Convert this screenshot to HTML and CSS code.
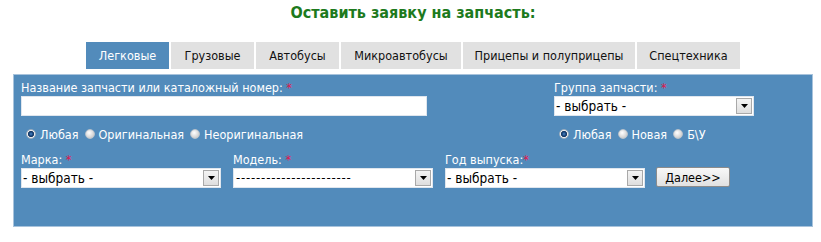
FILE: index.html
```html
<!DOCTYPE html>
<html lang="ru">
<head>
<meta charset="utf-8">
<title>Оставить заявку на запчасть</title>
<link rel="stylesheet" href="styles.css">
</head>
<body>
<div class="wrap">
  <h1 class="title">Оставить заявку на запчасть:</h1>
  <ul class="tabs">
    <li class="tab tab-active tab-w83">Легковые</li>
    <li class="tab tab-w83">Грузовые</li>
    <li class="tab tab-w83">Автобусы</li>
    <li class="tab tab-w120">Микроавтобусы</li>
    <li class="tab tab-w172">Прицепы и полуприцепы</li>
    <li class="tab tab-w103">Спецтехника</li>
  </ul>
  <form class="panel">
    <div class="row-top">
      <div class="field">
        <label class="lbl">Название запчасти или каталожный номер: <span class="req">*</span></label>
        <input class="text-input" type="text">
      </div>
      <div class="field">
        <label class="lbl">Группа запчасти: <span class="req">*</span></label>
        <div class="sel">
          <select class="sel-box"><option>- выбрать -</option></select>
          <span class="sel-arrow"><svg width="7" height="4" viewBox="0 0 7 4"><path d="M0 0H7L3.5 4Z" fill="#000"/></svg></span>
        </div>
      </div>
      <div class="radios">
        <input type="radio" name="o" checked><span class="rtext">Любая</span>
        <input type="radio" name="o"><span class="rtext">Оригинальная</span>
        <input type="radio" name="o"><span class="rtext">Неоригинальная</span>
      </div>
      <div class="radios">
        <input type="radio" name="n" checked><span class="rtext">Любая</span>
        <input type="radio" name="n"><span class="rtext">Новая</span>
        <input type="radio" name="n"><span class="rtext">Б\У</span>
      </div>
    </div>
    <div class="row-bottom">
      <div class="field">
        <label class="lbl">Марка: <span class="req">*</span></label>
        <div class="sel">
          <select class="sel-box"><option>- выбрать -</option></select>
          <span class="sel-arrow"><svg width="7" height="4" viewBox="0 0 7 4"><path d="M0 0H7L3.5 4Z" fill="#000"/></svg></span>
        </div>
      </div>
      <div class="field">
        <label class="lbl">Модель: <span class="req">*</span></label>
        <div class="sel">
          <select class="sel-box sel-dashes"><option>-----------------------</option></select>
          <span class="sel-arrow"><svg width="7" height="4" viewBox="0 0 7 4"><path d="M0 0H7L3.5 4Z" fill="#000"/></svg></span>
        </div>
      </div>
      <div class="field">
        <label class="lbl">Год выпуска:<span class="req">*</span></label>
        <div class="sel">
          <select class="sel-box"><option>- выбрать -</option></select>
          <span class="sel-arrow"><svg width="7" height="4" viewBox="0 0 7 4"><path d="M0 0H7L3.5 4Z" fill="#000"/></svg></span>
        </div>
      </div>
      <button class="btn" type="button">Далее&gt;&gt;</button>
    </div>
  </form>
</div>
</body>
</html>
```

FILE: styles.css
```css
html, body {
  margin: 0;
  padding: 0;
  background: #fff;
}
body {
  font-family: "DejaVu Sans Condensed", "DejaVu Sans", sans-serif;
  font-size: 12.5px;
  color: #000;
}
.wrap {
  width: 800px;
  margin-left: 13px;
}
.title {
  margin: 0;
  padding-top: 3px;
  height: 20px;
  line-height: 20px;
  text-align: center;
  font-size: 16px;
  font-weight: bold;
  color: #1d7a1d;
}
.tabs {
  list-style: none;
  margin: 19px 0 0 0;
  padding: 0;
  display: flex;
  justify-content: center;
  gap: 2px;
}
.tab {
  height: 27px;
  line-height: 27px;
  text-align: center;
  background: #e1e1e1;
  color: #111;
  font-size: 12.5px;
}
.tab-active {
  background: #528bbb;
  color: #fff;
}
.tab-w83 { width: 83px; }
.tab-w120 { width: 120px; }
.tab-w172 { width: 172px; }
.tab-w103 { width: 103px; }
.panel {
  margin: 5px 0 0 0;
  height: 146px;
  background: #528bbb;
  border: 1px solid #a8c3dc;
  padding: 5px 0 0 7px;
  box-sizing: content-box;
}
.row-top {
  display: grid;
  grid-template-columns: 533px 200px;
}
.field {
  display: flex;
  flex-direction: column;
}
.lbl {
  display: block;
  color: #fff;
  line-height: 16px;
  height: 16px;
}
.req {
  color: #e0154d;
}
.text-input {
  width: 406px;
  height: 20px;
  box-sizing: border-box;
  border: 1px solid #dfe6ee;
  background: #fff;
  margin: 0;
  padding: 0 2px;
  font-family: inherit;
}
.sel {
  width: 200px;
  height: 20px;
  box-sizing: border-box;
  background: #fff;
  border: 1px solid #dfe6ee;
  display: flex;
  align-items: center;
}
.sel-box {
  flex: 1;
  min-width: 0;
  appearance: none;
  -webkit-appearance: none;
  border: 0;
  background: transparent;
  margin: 0;
  padding: 0 0 0 1px;
  height: 18px;
  line-height: 18px;
  font-family: "DejaVu Sans Condensed", "DejaVu Sans", sans-serif;
  font-size: 13.5px;
  color: #000;
}
.sel-dashes {
  font-size: 13px;
  letter-spacing: 0.8px;
  padding-left: 2px;
}
.sel-arrow {
  width: 16px;
  height: 16px;
  margin-right: 1px;
  box-sizing: border-box;
  border: 1px solid #a9a9a9;
  background: linear-gradient(#f4f4f4, #dedede);
  display: flex;
  align-items: center;
  justify-content: center;
}
.radios {
  margin-top: 10px;
  height: 16px;
  display: flex;
  align-items: center;
  color: #fff;
}
.radios input[type="radio"] {
  appearance: none;
  -webkit-appearance: none;
  width: 10px;
  height: 10px;
  margin: 0 4px 0 5px;
  border-radius: 50%;
  box-sizing: border-box;
  border: 1px solid #b9c3cc;
  background: radial-gradient(circle at 40% 35%, #ffffff 0, #e2e2e2 45%, #bdbdbd 100%);
}
.radios input[type="radio"]:checked {
  border: 1px solid #9fb0c0;
  background: radial-gradient(circle at 50% 50%, #4a86c8 0, #133b6e 2.2px, #1a3c66 2.8px, #f2f2f2 3.4px, #d8d8d8 100%);
}
.rtext {
  margin-right: 1px;
}
.row-bottom {
  margin-top: 10px;
  display: flex;
  align-items: flex-end;
  gap: 12px;
}
.btn {
  width: 74px;
  height: 20px;
  margin: 0 0 1px -1px;
  box-sizing: border-box;
  border: 1px solid #8c8c8c;
  border-radius: 2px;
  background: linear-gradient(#f8f8f8, #e1e1e1);
  font-family: "DejaVu Sans Condensed", "DejaVu Sans", sans-serif;
  font-size: 12.5px;
  color: #000;
  padding: 0;
}
```
